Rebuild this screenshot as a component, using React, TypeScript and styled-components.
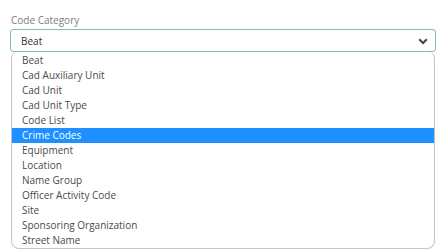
import React from "react";
import styled, { createGlobalStyle } from "styled-components";

const Global = createGlobalStyle`
  html, body { margin: 0; padding: 0; background: #fff; }
  body { font-family: "Open Sans", "Noto Sans", sans-serif; }
`;

const Page = styled.div`
  width: 442px;
  height: 251px;
  overflow: hidden;
  position: relative;
  background: #fff;
`;

const Field = styled.div`
  position: relative;
  padding: 13px 6px 0 10px;
  display: flex;
  flex-direction: column;
  gap: 2px;
`;

const Label = styled.label`
  font-size: 10px;
  color: #7d7d7d;
  line-height: 14px;
  padding-left: 1px;
`;

const SelectBox = styled.div`
  height: 23px;
  box-sizing: border-box;
  border: 1px solid #7fc29c;
  border-radius: 3px;
  display: flex;
  align-items: center;
  justify-content: space-between;
  padding: 0 7px 0 10px;
  font-size: 10px;
  color: #333;
`;

const Chevron = styled.svg`
  width: 10px;
  height: 7px;
  margin-top: 1px;
`;

const List = styled.ul`
  position: absolute;
  left: 11px;
  top: 52px;
  width: 424px;
  height: 197px;
  margin: 0;
  padding: 1px 0 0;
  list-style: none;
  box-sizing: border-box;
  border: 1px solid #c4c4c4;
  border-top: none;
  border-radius: 6px 6px 8px 8px;
  background: #fff;
  overflow: hidden;
`;

const Item = styled.li<{ $active?: boolean }>`
  height: 15px;
  line-height: 15px;
  padding-left: 10px;
  font-size: 10px;
  color: ${(p) => (p.$active ? "#fff" : "#4a4a4a")};
  background: ${(p) => (p.$active ? "#1e90ff" : "transparent")};
  white-space: nowrap;
`;

const options = [
  "Beat",
  "Cad Auxiliary Unit",
  "Cad Unit",
  "Cad Unit Type",
  "Code List",
  "Crime Codes",
  "Equipment",
  "Location",
  "Name Group",
  "Officer Activity Code",
  "Site",
  "Sponsoring Organization",
  "Street Name",
];

export default function App() {
  return (
    <Page>
      <Global />
      <Field>
        <Label>Code Category</Label>
        <SelectBox>
          <span>Beat</span>
          <Chevron viewBox="0 0 10 7">
            <path d="M1.2 1.2 L5 5 L8.8 1.2" fill="none" stroke="#444" strokeWidth="2" />
          </Chevron>
        </SelectBox>
      </Field>
      <List>
        {options.map((o) => (
          <Item key={o} $active={o === "Crime Codes"}>
            {o}
          </Item>
        ))}
      </List>
    </Page>
  );
}
